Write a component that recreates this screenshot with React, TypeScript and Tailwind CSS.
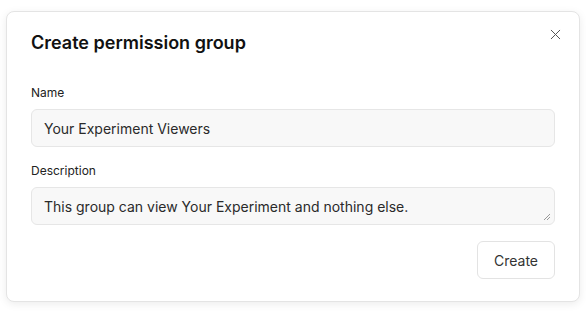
import { X } from 'lucide-react';

export default function App() {
  return (
    <div
      className="w-[586px] h-[314px] bg-white pt-[11px] pl-[6px]"
      style={{ fontFamily: 'Inter, "Noto Sans", sans-serif' }}
    >
      <div className="relative w-[574px] h-[291px] rounded-lg border border-[#e4e4e4] bg-white shadow-[0_2px_8px_rgba(0,0,0,0.08)] px-[24px] pt-[19px]">
        <button className="absolute right-[15px] top-[14px] text-[#555]">
          <X className="h-[17px] w-[17px]" strokeWidth={1.4} />
        </button>
        <h2 className="text-[18px] leading-[24px] font-semibold text-[#111]">Create permission group</h2>
        <div className="mt-[30px] flex flex-col">
          <label className="text-[12px] leading-[16px] text-[#222]">Name</label>
          <div className="mt-[8px] h-[38px] rounded-md border border-[#e6e6e6] bg-[#f8f8f8] px-[12px] flex items-center text-[14px] text-[#2a2a2a]">
            Your Experiment Viewers
          </div>
          <label className="mt-[16px] text-[12px] leading-[16px] text-[#222]">Description</label>
          <div className="relative mt-[8px] h-[38px] rounded-md border border-[#e6e6e6] bg-[#f8f8f8] px-[12px] flex items-center text-[14px] text-[#2a2a2a]">
            This group can view Your Experiment and nothing else.
            <svg className="absolute right-[3px] bottom-[3px]" width="8" height="8" viewBox="0 0 8 8">
              <path d="M7 1L1 7M7 4L4 7" stroke="#999" strokeWidth="1" />
            </svg>
          </div>
          <div className="mt-[16px] flex justify-end">
            <button className="h-[38px] w-[78px] rounded-md border border-[#e3e3e3] bg-white text-[14px] text-[#333]">
              Create
            </button>
          </div>
        </div>
      </div>
    </div>
  );
}
